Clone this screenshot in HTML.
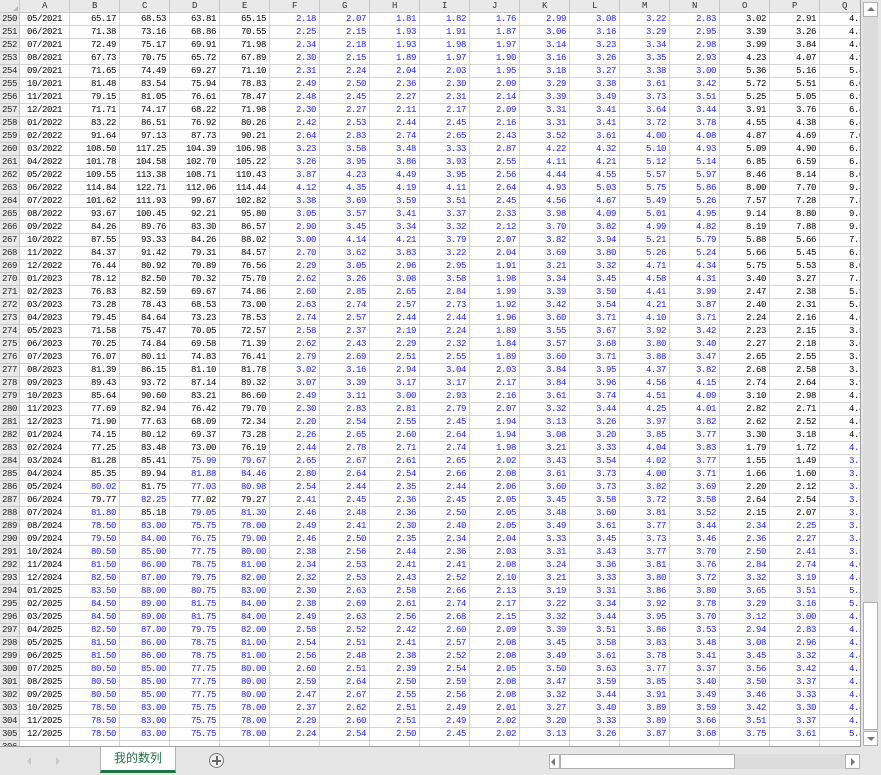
<!DOCTYPE html>
<html><head><meta charset="utf-8">
<style>
*{margin:0;padding:0;box-sizing:border-box}
body{width:881px;height:775px;background:#e6e6e6;position:relative;overflow:hidden;font-family:"Liberation Mono",monospace}
#grid{position:absolute;left:0;top:0;width:861px;height:747px;background:#fff;overflow:hidden;border-bottom:1px solid #a0a0a0;border-right:1px solid #a0a0a0}
.c{position:absolute;height:13px;line-height:13px;font-size:9px;letter-spacing:-0.4px;border-right:1px solid #d4d4d4;border-bottom:1px solid #d4d4d4;white-space:nowrap;overflow:hidden;text-align:right;padding-right:3px;color:#000}
.h{background:#e9e9e9;color:#333;text-align:center;padding:0;border-color:#c8c8c8}
.rh{background:#e9e9e9;color:#222;text-align:left;padding-left:2px;border-color:#c8c8c8}
.b{color:#1c1cff}
.ctr{text-align:center;padding:0}
</style></head><body>
<div id="grid"></div>
<div style="position:absolute;left:862px;top:0;width:19px;height:747px;background:#e6e6e6"></div>
<div style="position:absolute;left:863px;top:2px;width:15px;height:743px;background:#dcdcdc"></div>
<div style="position:absolute;left:863px;top:2px;width:15px;height:15px;background:#fff;border:1px solid #b0b0b0"></div>
<div style="position:absolute;left:867px;top:7px;width:0;height:0;border-left:4px solid transparent;border-right:4px solid transparent;border-bottom:4px solid #777"></div>
<div style="position:absolute;left:863px;top:602px;width:15px;height:128px;background:#fff;border:1px solid #b0b0b0"></div>
<div style="position:absolute;left:863px;top:731px;width:15px;height:15px;background:#fff;border:1px solid #b0b0b0"></div>
<div style="position:absolute;left:867px;top:737px;width:0;height:0;border-left:4px solid transparent;border-right:4px solid transparent;border-top:4px solid #777"></div>
<!-- tab bar -->
<div style="position:absolute;left:27px;top:757px;width:0;height:0;border-top:4px solid transparent;border-bottom:4px solid transparent;border-right:4px solid #c8c8c8"></div>
<div style="position:absolute;left:56px;top:757px;width:0;height:0;border-top:4px solid transparent;border-bottom:4px solid transparent;border-left:4px solid #c8c8c8"></div>
<div style="position:absolute;left:100px;top:747px;width:76px;height:26px;background:#fff;border-left:1px solid #b0b0b0;border-right:1px solid #b0b0b0;border-bottom:3px solid #217346;text-align:center;font:12px/22px 'Liberation Sans','Noto Sans CJK SC',sans-serif;color:#217346">我的数列</div>
<div style="position:absolute;left:209px;top:753px;width:15px;height:15px;border:1.5px solid #777;border-radius:50%;background:#f0f0f0"></div>
<div style="position:absolute;left:212px;top:759.5px;width:9px;height:2px;background:#666"></div>
<div style="position:absolute;left:215.5px;top:756px;width:2px;height:9px;background:#666"></div>
<!-- h scrollbar -->
<div style="position:absolute;left:550px;top:754px;width:310px;height:15px;background:#dcdcdc"></div>
<div style="position:absolute;left:549px;top:754px;width:11px;height:15px;background:#fff;border:1px solid #b0b0b0"></div>
<div style="position:absolute;left:551px;top:758px;width:0;height:0;border-top:4px solid transparent;border-bottom:4px solid transparent;border-right:4px solid #777"></div>
<div style="position:absolute;left:560px;top:754px;width:175px;height:15px;background:#fff;border:1px solid #b0b0b0"></div>
<div style="position:absolute;left:845px;top:754px;width:15px;height:15px;background:#fff;border:1px solid #b0b0b0"></div>
<div style="position:absolute;left:851px;top:758px;width:0;height:0;border-top:4px solid transparent;border-bottom:4px solid transparent;border-left:4px solid #777"></div>
<script>
var D=`05/2021 65.17 68.53 63.81 65.15 2.18 2.07 1.81 1.82 1.76 2.99 3.08 3.22 2.83 3.02 2.91 4.12
06/2021 71.38 73.16 68.86 70.55 2.25 2.15 1.93 1.91 1.87 3.06 3.16 3.29 2.95 3.39 3.26 4.12
07/2021 72.49 75.17 69.91 71.98 2.34 2.18 1.93 1.98 1.97 3.14 3.23 3.34 2.98 3.99 3.84 4.62
08/2021 67.73 70.75 65.72 67.89 2.30 2.15 1.89 1.97 1.90 3.16 3.26 3.35 2.93 4.23 4.07 4.92
09/2021 71.65 74.49 69.27 71.10 2.31 2.24 2.04 2.03 1.95 3.18 3.27 3.38 3.00 5.36 5.16 5.42
10/2021 81.48 83.54 75.94 78.83 2.49 2.50 2.36 2.30 2.09 3.29 3.38 3.61 3.42 5.72 5.51 6.02
11/2021 79.15 81.05 76.61 78.47 2.48 2.45 2.27 2.31 2.14 3.39 3.49 3.73 3.51 5.25 5.05 6.92
12/2021 71.71 74.17 68.22 71.98 2.30 2.27 2.11 2.17 2.09 3.31 3.41 3.64 3.44 3.91 3.76 6.42
01/2022 83.22 86.51 76.92 80.26 2.42 2.53 2.44 2.45 2.16 3.31 3.41 3.72 3.78 4.55 4.38 6.42
02/2022 91.64 97.13 87.73 90.21 2.64 2.83 2.74 2.65 2.43 3.52 3.61 4.00 4.08 4.87 4.69 7.02
03/2022 108.50 117.25 104.39 106.98 3.23 3.58 3.48 3.33 2.87 4.22 4.32 5.10 4.93 5.09 4.90 6.12
04/2022 101.78 104.58 102.70 105.22 3.26 3.95 3.86 3.93 2.55 4.11 4.21 5.12 5.14 6.85 6.59 6.32
05/2022 109.55 113.38 108.71 110.43 3.87 4.23 4.49 3.95 2.56 4.44 4.55 5.57 5.97 8.46 8.14 8.02
06/2022 114.84 122.71 112.06 114.44 4.12 4.35 4.19 4.11 2.64 4.93 5.03 5.75 5.86 8.00 7.70 9.32
07/2022 101.62 111.93 99.67 102.82 3.38 3.69 3.59 3.51 2.45 4.56 4.67 5.49 5.26 7.57 7.28 7.82
08/2022 93.67 100.45 92.21 95.80 3.05 3.57 3.41 3.37 2.33 3.98 4.09 5.01 4.95 9.14 8.80 9.42
09/2022 84.26 89.76 83.30 86.57 2.90 3.45 3.34 3.32 2.12 3.70 3.82 4.99 4.82 8.19 7.88 9.52
10/2022 87.55 93.33 84.26 88.02 3.00 4.14 4.21 3.79 2.07 3.82 3.94 5.21 5.79 5.88 5.66 7.12
11/2022 84.37 91.42 79.31 84.57 2.70 3.62 3.83 3.22 2.04 3.69 3.80 5.26 5.24 5.66 5.45 6.12
12/2022 76.44 80.92 70.89 76.56 2.29 3.05 2.96 2.95 1.91 3.21 3.32 4.71 4.34 5.75 5.53 8.02
01/2023 78.12 82.50 70.32 75.70 2.62 3.26 3.08 3.58 1.98 3.34 3.45 4.58 4.31 3.40 3.27 7.22
02/2023 76.83 82.59 69.67 74.86 2.60 2.85 2.65 2.84 1.99 3.39 3.50 4.41 3.99 2.47 2.38 5.92
03/2023 73.28 78.43 68.53 73.00 2.63 2.74 2.57 2.73 1.92 3.42 3.54 4.21 3.87 2.40 2.31 5.82
04/2023 79.45 84.64 73.23 78.53 2.74 2.57 2.44 2.44 1.96 3.60 3.71 4.10 3.71 2.24 2.16 4.62
05/2023 71.58 75.47 70.05 72.57 2.58 2.37 2.19 2.24 1.89 3.55 3.67 3.92 3.42 2.23 2.15 3.52
06/2023 70.25 74.84 69.58 71.39 2.62 2.43 2.29 2.32 1.84 3.57 3.68 3.80 3.40 2.27 2.18 3.62
07/2023 76.07 80.11 74.83 76.41 2.79 2.69 2.51 2.55 1.89 3.60 3.71 3.88 3.47 2.65 2.55 3.92
08/2023 81.39 86.15 81.10 81.78 3.02 3.16 2.94 3.04 2.03 3.84 3.95 4.37 3.82 2.68 2.58 3.72
09/2023 89.43 93.72 87.14 89.32 3.07 3.39 3.17 3.17 2.17 3.84 3.96 4.56 4.15 2.74 2.64 3.92
10/2023 85.64 90.60 83.21 86.60 2.49 3.11 3.00 2.93 2.16 3.61 3.74 4.51 4.09 3.10 2.98 4.12
11/2023 77.69 82.94 76.42 79.70 2.30 2.83 2.81 2.79 2.07 3.32 3.44 4.25 4.01 2.82 2.71 4.42
12/2023 71.90 77.63 68.09 72.34 2.20 2.54 2.55 2.45 1.94 3.13 3.26 3.97 3.82 2.62 2.52 4.52
01/2024 74.15 80.12 69.37 73.28 2.26 2.65 2.60 2.64 1.94 3.08 3.20 3.85 3.77 3.30 3.18 4.92
02/2024 77.25 83.48 73.00 76.19 2.44 2.78 2.71 2.74 1.98 3.21 3.33 4.04 3.83 1.79 1.72 4.72
03/2024 81.28 85.41 75.99 79.67 2.65 2.67 2.61 2.65 2.02 3.43 3.54 4.02 3.77 1.55 1.49 3.72
04/2024 85.35 89.94 81.88 84.46 2.80 2.64 2.54 2.66 2.08 3.61 3.73 4.00 3.71 1.66 1.60 3.32
05/2024 80.02 81.75 77.03 80.98 2.54 2.44 2.35 2.44 2.06 3.60 3.73 3.82 3.69 2.20 2.12 3.12
06/2024 79.77 82.25 77.02 79.27 2.41 2.45 2.36 2.45 2.05 3.45 3.58 3.72 3.58 2.64 2.54 3.72
07/2024 81.80 85.18 79.05 81.30 2.46 2.48 2.36 2.50 2.05 3.48 3.60 3.81 3.52 2.15 2.07 3.32
08/2024 78.50 83.00 75.75 78.00 2.49 2.41 2.30 2.40 2.05 3.49 3.61 3.77 3.44 2.34 2.25 3.12
09/2024 79.50 84.00 76.75 79.00 2.46 2.50 2.35 2.34 2.04 3.33 3.45 3.73 3.46 2.36 2.27 3.42
10/2024 80.50 85.00 77.75 80.00 2.38 2.56 2.44 2.36 2.03 3.31 3.43 3.77 3.70 2.50 2.41 3.52
11/2024 81.50 86.00 78.75 81.00 2.34 2.53 2.41 2.41 2.08 3.24 3.36 3.81 3.76 2.84 2.74 4.02
12/2024 82.50 87.00 79.75 82.00 2.32 2.53 2.43 2.52 2.10 3.21 3.33 3.80 3.72 3.32 3.19 4.82
01/2025 83.50 88.00 80.75 83.00 2.30 2.63 2.58 2.66 2.13 3.19 3.31 3.86 3.80 3.65 3.51 5.22
02/2025 84.50 89.00 81.75 84.00 2.38 2.69 2.61 2.74 2.17 3.22 3.34 3.92 3.78 3.29 3.16 5.22
03/2025 84.50 89.00 81.75 84.00 2.49 2.63 2.56 2.68 2.15 3.32 3.44 3.95 3.70 3.12 3.00 4.52
04/2025 82.50 87.00 79.75 82.00 2.58 2.52 2.42 2.60 2.09 3.39 3.51 3.86 3.53 2.94 2.83 4.22
05/2025 81.50 86.00 78.75 81.00 2.54 2.51 2.41 2.57 2.08 3.45 3.58 3.83 3.48 3.08 2.96 4.12
06/2025 81.50 86.00 78.75 81.00 2.56 2.48 2.38 2.52 2.08 3.49 3.61 3.78 3.41 3.45 3.32 4.42
07/2025 80.50 85.00 77.75 80.00 2.60 2.51 2.39 2.54 2.05 3.50 3.63 3.77 3.37 3.56 3.42 4.32
08/2025 80.50 85.00 77.75 80.00 2.59 2.64 2.50 2.59 2.08 3.47 3.59 3.85 3.40 3.50 3.37 4.32
09/2025 80.50 85.00 77.75 80.00 2.47 2.67 2.55 2.56 2.08 3.32 3.44 3.91 3.49 3.46 3.33 4.42
10/2025 78.50 83.00 75.75 78.00 2.37 2.62 2.51 2.49 2.01 3.27 3.40 3.89 3.59 3.42 3.30 4.42
11/2025 78.50 83.00 75.75 78.00 2.29 2.60 2.51 2.49 2.02 3.20 3.33 3.89 3.66 3.51 3.37 4.72
12/2025 78.50 83.00 75.75 78.00 2.24 2.54 2.50 2.45 2.02 3.13 3.26 3.87 3.68 3.75 3.61 5.42`.split("\n");
var g=document.getElementById('grid'),h='';
var L="ABCDEFGHIJKLMNOPQ";
function cell(x,y,w,cls,t,ex){return '<div class="c '+cls+'" style="left:'+x+'px;top:'+y+'px;width:'+w+'px;'+(ex||'')+'">'+t+'</div>';}
h+=cell(0,0,20,'h','');
h+='<div style="position:absolute;left:13px;top:6px;width:0;height:0;border-left:5px solid transparent;border-bottom:5px solid #b8b8b8"></div>';
for(var j=0;j<17;j++)h+=cell(20+50*j,0,50,'h',L[j]);
var bl={284:[3,4],285:[3,4],286:[1,3,4],287:[2],288:[1,3,4]};
for(var i=0;i<=56;i++){
 var y=13+13*i,r=250+i;
 h+=cell(0,y,20,'rh',i<56?r:'306');
 var v=i<56?D[i].split(' '):[];
 for(var j=0;j<17;j++){
  var c='';
  if(j>=5&&j<=13)c='b';
  if(j>=14&&j<=15&&r>=289)c='b';
  if(j==16&&r>=283)c='b';
  if(j>=1&&j<=4&&(r>=289||(bl[r]&&bl[r].indexOf(j)>=0)))c='b';
  if(j==0)c='ctr';
  var t=v[j]||'';
  var ex='';
  if(j==16){ex='text-align:left;padding-left:'+(t?29:0)+'px;';}
  h+=cell(20+50*j,y,50,c,t,ex);
 }
}
g.innerHTML=h;
</script>
</body></html>
